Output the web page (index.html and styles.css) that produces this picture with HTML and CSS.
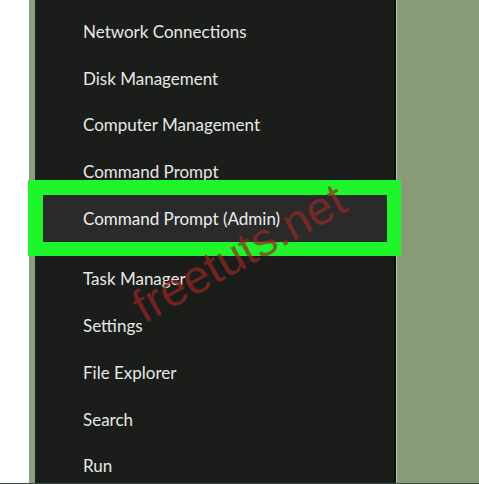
FILE: index.html
```html
<!DOCTYPE html>
<html>
<head>
<meta charset="utf-8">
<link rel="stylesheet" href="styles.css">
</head>
<body>
<div class="screen">
  <div class="blank"></div>
  <div class="strip"></div>
  <div class="panel">
    <ul class="menu">
      <li class="item">Network Connections</li>
      <li class="item">Disk Management</li>
      <li class="item">Computer Management</li>
      <li class="item">Command Prompt</li>
      <li class="item">Command Prompt (Admin)</li>
    </ul>
    <ul class="menu second">
      <li class="item">Task Manager</li>
      <li class="item">Settings</li>
      <li class="item">File Explorer</li>
      <li class="item">Search</li>
      <li class="item">Run</li>
    </ul>
  </div>
  <div class="edge"></div>
  <div class="desktop"></div>
</div>
<div class="highlight"><div class="highlight-inner">Command Prompt (Admin)</div></div>
<div class="watermark">freetuts.net</div>
<div class="bottom-line"></div>
</body>
</html>
```
FILE: styles.css
```css
html, body {
  margin: 0;
  padding: 0;
  width: 479px;
  height: 484px;
  overflow: hidden;
  background: #889b76;
}
.screen {
  display: flex;
  height: 484px;
}
.blank {
  width: 29px;
  background: #ffffff;
}
.strip {
  width: 6px;
  background: #8aa07c;
}
.panel {
  width: 359px;
  background: #1a1d1a;
  padding-top: 9px;
  box-sizing: border-box;
}
.edge {
  width: 4px;
  background: linear-gradient(to right, #0e100e 0, #0e100e 2px, #b8bcb4 2px, #b8bcb4 3px, #8a9c78 3px);
}
.desktop {
  flex: 1;
  background: #889b76;
}
.menu {
  list-style: none;
  margin: 0;
  padding: 0 0 0 48px;
}
.menu.second {
  margin-top: 14px;
}
.item {
  height: 46.7px;
  line-height: 46.7px;
  font-family: Lato, "Open Sans", sans-serif;
  font-size: 17px;
  color: #e8e8e8;
  white-space: nowrap;
}
.highlight {
  position: absolute;
  left: 28px;
  top: 180px;
  width: 373px;
  height: 76px;
  background: #1ef52b;
  box-sizing: border-box;
  padding: 15px 14px 14px 15px;
}
.highlight-inner {
  height: 100%;
  background: #2a2a2a;
  padding-left: 40px;
  line-height: 47px;
  font-family: Lato, "Open Sans", sans-serif;
  font-size: 17px;
  color: #eeeeee;
  white-space: nowrap;
}
.watermark {
  position: absolute;
  left: 104px;
  top: 228px;
  width: 270px;
  text-align: center;
  font-family: "Liberation Sans", Arial, sans-serif;
  font-size: 47px;
  line-height: 50px;
  color: rgba(150, 40, 38, 0.7);
  transform: rotate(-29deg);
  transform-origin: center center;
  white-space: nowrap;
}
.bottom-line {
  position: absolute;
  left: 0;
  top: 483px;
  width: 479px;
  height: 1px;
  background: #3c4846;
}
```
